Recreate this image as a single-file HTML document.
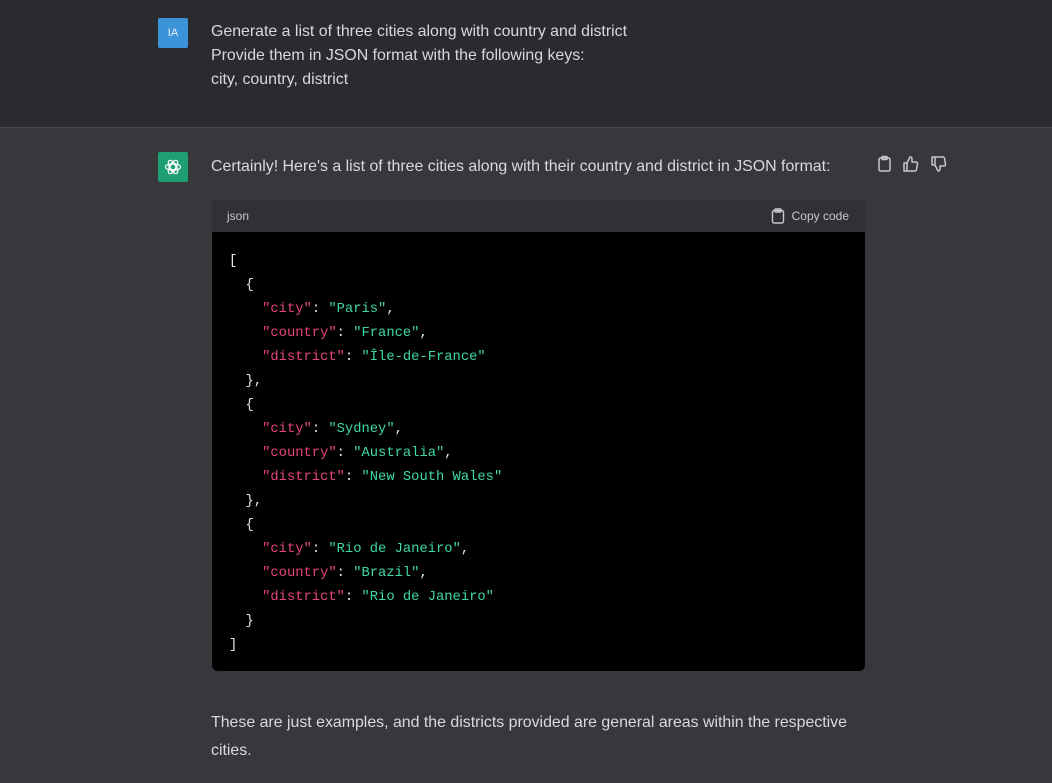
<!DOCTYPE html>
<html><head><meta charset="utf-8"><style>
body{margin:0;width:1052px;height:783px;overflow:hidden;font-family:"Liberation Sans",sans-serif;color:#d1d5db;background:#36383b}
.top{position:absolute;left:0;top:0;width:1052px;height:127px;background:#2a2b2f;border-bottom:1px solid #45474c}
.av{position:absolute;left:158px;width:30px;height:30px;border-radius:2px;display:flex;align-items:center;justify-content:center}
.t{position:absolute;left:211px;font-size:15.9px;line-height:24px;color:#d7d9de}
.code{position:absolute;left:212px;top:200px;width:653px;height:471px;background:#000;border-radius:6px;overflow:hidden}
.ch{height:32px;background:#303136;display:flex;align-items:center;justify-content:space-between;padding:0 16px 0 15px;font-size:12px;color:#c5c7cc}
pre{margin:0;padding:18px 0 0 17px;font-family:"Liberation Mono",monospace;font-size:13.8px;line-height:24px;color:#e6e6e6}
.k{color:#e8457c}.s{color:#3fd9a9}
</style></head><body>
<div class="top"></div>
<div class="av" style="top:18px;background:#3b93d8;color:#e6f0fa;font-size:11px">IA</div>
<div class="t" style="top:20px">Generate a list of three cities along with country and district<br>Provide them in JSON format with the following keys:<br>city, country, district</div>
<div class="av" style="top:152px;background:#1f9e71">
<svg width="20" height="20" viewBox="0 0 24 24" fill="none" stroke="#fff" stroke-width="1.4"><circle cx="12" cy="12" r="3.5"/><ellipse cx="12" cy="12" rx="9" ry="4"/><ellipse cx="12" cy="12" rx="9" ry="4" transform="rotate(60 12 12)"/><ellipse cx="12" cy="12" rx="9" ry="4" transform="rotate(120 12 12)"/></svg></div>
<div class="t" style="top:155px">Certainly! Here's a list of three cities along with their country and district in JSON format:</div>
<svg style="position:absolute;left:877px;top:155px" width="76" height="18" viewBox="0 0 76 18" fill="none" stroke="#c5c7cc" stroke-width="1.5" stroke-linejoin="round">
<rect x="2" y="3" width="11" height="13" rx="1.5"/><rect x="5" y="1.5" width="5" height="3" rx=".5"/>
<path d="M30 8v8h-3V8zM30 8l3-6c1.5 0 2 1 2 2v3h4c1 0 1.7.8 1.5 1.8l-1 6c-.2.7-.8 1.2-1.5 1.2H30"/>
<path d="M58 10V2h-3v8zM58 10l3 6c1.5 0 2-1 2-2v-3h4c1 0 1.7-.8 1.5-1.8l-1-6C67.3 2.5 66.7 2 66 2h-8"/>
</svg>
<div class="code"><div class="ch"><span>json</span><span style="display:flex;align-items:center;gap:7px"><svg width="14" height="16" viewBox="0 0 14 16" fill="none" stroke="#c5c7cc" stroke-width="1.4"><rect x="1.5" y="2.5" width="11" height="12.5" rx="1.5"/><rect x="4" y="1" width="6" height="3" rx=".5"/></svg>Copy code</span></div>
<pre>[
  {
    <span class="k">"city"</span>: <span class="s">"Paris"</span>,
    <span class="k">"country"</span>: <span class="s">"France"</span>,
    <span class="k">"district"</span>: <span class="s">"Île-de-France"</span>
  },
  {
    <span class="k">"city"</span>: <span class="s">"Sydney"</span>,
    <span class="k">"country"</span>: <span class="s">"Australia"</span>,
    <span class="k">"district"</span>: <span class="s">"New South Wales"</span>
  },
  {
    <span class="k">"city"</span>: <span class="s">"Rio de Janeiro"</span>,
    <span class="k">"country"</span>: <span class="s">"Brazil"</span>,
    <span class="k">"district"</span>: <span class="s">"Rio de Janeiro"</span>
  }
]</pre></div>
<div class="t" style="top:709px;line-height:28px">These are just examples, and the districts provided are general areas within the respective<br>cities.</div>
</body></html>
